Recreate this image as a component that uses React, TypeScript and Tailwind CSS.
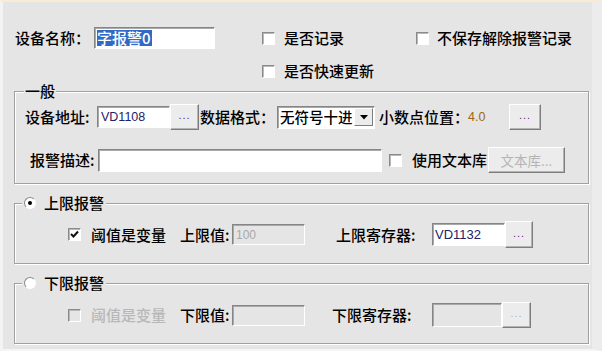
import React from "react"

const font = { fontFamily: '"Noto Sans CJK SC", "Liberation Sans", sans-serif' }

function Sunken({ className = "", children }: { className?: string; children?: React.ReactNode }) {
  return (
    <div
      className={
        "flex items-center border border-t-[#858585] border-l-[#858585] border-b-white border-r-white shadow-[inset_1px_1px_0_#a9a9a9] " +
        className
      }
    >
      {children}
    </div>
  )
}

function Dots({ className = "", disabled = false }: { className?: string; disabled?: boolean }) {
  return (
    <div
      className={
        "flex items-center justify-center bg-[#ececec] border border-t-white border-l-white border-b-[#7d7d7d] border-r-[#7d7d7d] shadow-[inset_-1px_-1px_0_#b4b4b4] " +
        className
      }
    >
      <span
        className={
          "text-[11px] leading-none tracking-[1px] pb-[3px] font-['Liberation_Sans'] " +
          (disabled ? "text-[#b0b0b0]" : "text-[#5a1f7a]")
        }
      >
        ...
      </span>
    </div>
  )
}

function Check({ checked = false, disabled = false }: { checked?: boolean; disabled?: boolean }) {
  return (
    <div
      className={
        "w-[13px] h-[13px] shrink-0 flex items-center justify-center border border-t-[#8a8a8a] border-l-[#8a8a8a] border-b-white border-r-white shadow-[inset_1px_1px_0_#b9b9b9] " +
        (disabled ? "bg-[#e5e5e5]" : "bg-white")
      }
    >
      {checked && (
        <svg width="9" height="9" viewBox="0 0 9 9">
          <path d="M1 4 L3.5 6.5 L8 1.5" stroke="#111" strokeWidth="2" fill="none" />
        </svg>
      )}
    </div>
  )
}

function Radio({ on = false }: { on?: boolean }) {
  return (
    <div className="w-[12px] h-[12px] shrink-0 rounded-full bg-white border border-t-[#8a8a8a] border-l-[#8a8a8a] border-b-white border-r-white flex items-center justify-center">
      {on && <div className="w-[4px] h-[4px] rounded-full bg-black" />}
    </div>
  )
}

export default function App() {
  return (
    <div
      style={font}
      className="w-[602px] h-[351px] bg-[#e5e5e5] text-[15px] leading-[20px] font-medium text-black overflow-hidden border-t-2 border-t-[#f8edd2] border-l-[3px] border-l-[#f3f3f3] border-b-2 border-b-[#f5f5f5] border-r-[10px] border-r-[#ececec]"
    >
      {/* name row */}
      <div className="flex items-center h-[22px] mt-[25px] pl-[12px]">
        <span className="w-[79px]">设备名称：</span>
        <Sunken className="w-[121px] h-[22px] bg-white pl-[2px]">
          <span className="bg-[#3169c6] text-white leading-[16px] pr-[1px]">字报警0</span>
        </Sunken>
        <div className="flex items-center ml-[47px] w-[154px]">
          <Check />
          <span className="ml-[9px]">是否记录</span>
        </div>
        <div className="flex items-center">
          <Check />
          <span className="ml-[8px]">不保存解除报警记录</span>
        </div>
      </div>
      <div className="flex items-center h-[22px] mt-[11px] pl-[259px]">
        <Check />
        <span className="ml-[9px]">是否快速更新</span>
      </div>

      {/* general */}
      <fieldset className="ml-[11px] w-[575px] -mt-[1px] border border-[#a0a0a0] shadow-[1px_1px_0_#fff,inset_1px_1px_0_#fff]">
        <legend className="ml-[9px] px-[1px] bg-[#e5e5e5]">一般</legend>
        <div className="flex items-center h-[26px] mt-[3px] pl-[10px]">
          <span className="w-[72px]">设备地址:</span>
          <Sunken className="w-[73px] h-[22px] bg-white pl-[3px]">
            <span className="font-['Liberation_Sans'] font-normal text-[12.5px] text-[#222266]">VD1108</span>
          </Sunken>
          <Dots className="w-[29px] h-[26px]" />
          <span className="ml-[1px] w-[77px]">数据格式：</span>
          <Sunken className="w-[98px] h-[23px] bg-white pl-[2px] pr-[1px]">
            <span className="whitespace-nowrap text-[14.5px]">无符号十进</span>
            <div className="ml-auto w-[19px] h-[18px] flex items-center justify-center bg-[#ececec] border border-t-white border-l-white border-b-[#7d7d7d] border-r-[#7d7d7d]">
              <svg width="8" height="5" viewBox="0 0 8 5">
                <path d="M0 0 H8 L4 4.5 Z" fill="#000" />
              </svg>
            </div>
          </Sunken>
          <span className="ml-[4px] w-[89px] whitespace-nowrap">小数点位置：</span>
          <span className="w-[41px] font-['Liberation_Sans'] font-normal text-[12.5px] text-[#9a6a10]">4.0</span>
          <Dots className="w-[32px] h-[26px]" />
        </div>
        <div className="flex items-center h-[26px] mt-[17px] mb-[10px] pl-[15px]">
          <span className="w-[68px]">报警描述:</span>
          <Sunken className="w-[284px] h-[23px] bg-white" />
          <div className="ml-[7px]">
            <Check />
          </div>
          <span className="ml-[10px] w-[76px]">使用文本库</span>
          <div className="w-[77px] h-[26px] flex items-center justify-center bg-[#ececec] border border-t-white border-l-white border-b-[#7d7d7d] border-r-[#7d7d7d] shadow-[inset_-1px_-1px_0_#b4b4b4] text-[#b4b4b4] text-[13.5px] font-normal">
            文本库...
          </div>
        </div>
      </fieldset>

      {/* upper alarm */}
      <fieldset className="ml-[11px] w-[575px] mt-[9px] border border-[#a0a0a0] shadow-[1px_1px_0_#fff,inset_1px_1px_0_#fff]">
        <legend className="ml-[7px] px-[2px] bg-[#e5e5e5] flex items-center">
          <Radio on />
          <span className="ml-[8px]">上限报警</span>
        </legend>
        <div className="flex items-center h-[27px] mt-[8px] mb-[15px] pl-[53px]">
          <Check checked />
          <span className="ml-[10px] w-[89px]">阈值是变量</span>
          <span className="w-[52px]">上限值:</span>
          <Sunken className="w-[73px] h-[21px] pl-[3px]">
            <span className="font-['Liberation_Sans'] font-normal text-[12px] text-[#a8a8a8]">100</span>
          </Sunken>
          <span className="ml-[31px] w-[96px]">上限寄存器:</span>
          <Sunken className="w-[73px] h-[23px] bg-white pl-[2px]">
            <span className="font-['Liberation_Sans'] font-normal text-[13px] text-[#222266]">VD1132</span>
          </Sunken>
          <Dots className="w-[28px] h-[27px]" />
        </div>
      </fieldset>

      {/* lower alarm */}
      <fieldset className="ml-[11px] w-[575px] mt-[9px] border border-[#a0a0a0] shadow-[1px_1px_0_#fff,inset_1px_1px_0_#fff]">
        <legend className="ml-[7px] px-[2px] bg-[#e5e5e5] flex items-center">
          <Radio />
          <span className="ml-[8px]">下限报警</span>
        </legend>
        <div className="flex items-center h-[26px] mt-[9px] mb-[15px] pl-[53px]">
          <Check disabled />
          <span className="ml-[10px] w-[89px] text-[#b8b8b8]">阈值是变量</span>
          <span className="w-[52px]">下限值:</span>
          <Sunken className="w-[73px] h-[21px]" />
          <span className="ml-[27px] w-[100px]">下限寄存器:</span>
          <Sunken className="w-[70px] h-[24px]" />
          <Dots disabled className="w-[29px] h-[26px]" />
        </div>
      </fieldset>
    </div>
  )
}
